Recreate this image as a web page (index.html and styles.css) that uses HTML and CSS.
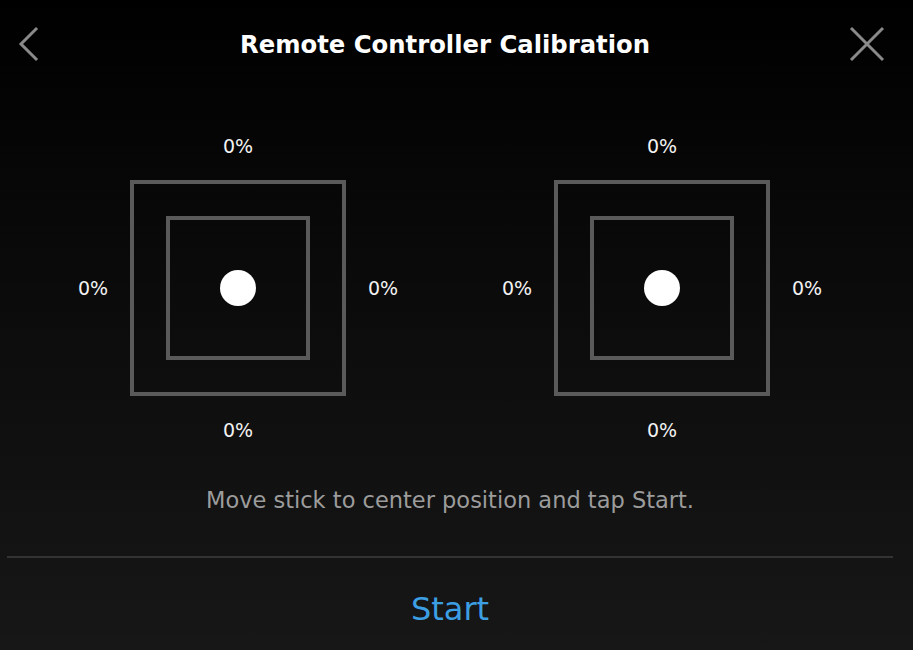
FILE: index.html
```html
<!DOCTYPE html>
<html>
<head>
<meta charset="utf-8">
<link rel="stylesheet" href="styles.css">
</head>
<body>
<div class="app">
  <header class="header">
    <button class="icon-btn back" aria-label="Back">
      <svg width="24" height="36" viewBox="0 0 24 36"><path d="M19 3 L4 18 L19 33" fill="none" stroke="#8a8a8a" stroke-width="3" stroke-linecap="square"/></svg>
    </button>
    <h1 class="title">Remote Controller Calibration</h1>
    <button class="icon-btn close" aria-label="Close">
      <svg width="36" height="36" viewBox="0 0 36 36"><path d="M2 2 L34 34 M34 2 L2 34" fill="none" stroke="#8a8a8a" stroke-width="3"/></svg>
    </button>
  </header>

  <section class="sticks">
    <div class="stick">
      <span class="pct top">0%</span>
      <span class="pct left">0%</span>
      <div class="outer"><div class="inner"><div class="dot"></div></div></div>
      <span class="pct right">0%</span>
      <span class="pct bottom">0%</span>
    </div>
    <div class="stick">
      <span class="pct top">0%</span>
      <span class="pct left">0%</span>
      <div class="outer"><div class="inner"><div class="dot"></div></div></div>
      <span class="pct right">0%</span>
      <span class="pct bottom">0%</span>
    </div>
  </section>

  <p class="hint">Move stick to center position and tap Start.</p>

  <div class="divider"></div>

  <button class="start">Start</button>
</div>
</body>
</html>
```

FILE: styles.css
```css
* { box-sizing: border-box; }
html, body { height: 100%; }
body {
  margin: 0;
  background: linear-gradient(to bottom, #000 0%, #0b0b0b 45%, #171717 100%);
  font-family: "DejaVu Sans", "Liberation Sans", sans-serif;
  color: #fff;
  overflow: hidden;
}
.app {
  width: 900px;
  height: 650px;
  display: flex;
  flex-direction: column;
  align-items: center;
}
.header {
  width: 100%;
  height: 88px;
  display: flex;
  align-items: center;
  justify-content: space-between;
  padding: 0 15px 0 17px;
}
.icon-btn {
  background: none;
  border: 0;
  padding: 0;
  display: flex;
  cursor: pointer;
}
.title {
  margin: 0;
  font-size: 24.3px;
  font-weight: 700;
  color: #fff;
}
.sticks {
  margin-top: 43px;
  display: flex;
  gap: 74px;
}
.stick {
  display: grid;
  grid-template-columns: 60px 216px 60px;
  grid-template-rows: 30px 216px 30px;
  column-gap: 7px;
  row-gap: 19px;
  grid-template-areas:
    ". t ."
    "l b r"
    ". d .";
}
.pct {
  font-size: 19px;
  color: #f2f2f2;
  display: flex;
  align-items: center;
  justify-content: center;
}
.pct.top { grid-area: t; }
.pct.left { grid-area: l; }
.pct.right { grid-area: r; }
.pct.bottom { grid-area: d; }
.outer {
  grid-area: b;
  border: 4px solid #5a5a5a;
  display: flex;
  align-items: center;
  justify-content: center;
}
.inner {
  width: 144px;
  height: 144px;
  border: 4px solid #5a5a5a;
  display: flex;
  align-items: center;
  justify-content: center;
}
.dot {
  width: 36px;
  height: 36px;
  border-radius: 50%;
  background: #fff;
}
.hint {
  margin: 40px 0 0;
  font-size: 22.5px;
  line-height: 30px;
  color: #9c9c9c;
}
.divider {
  margin-top: 41px;
  width: 886px;
  height: 2px;
  background: #333;
}
.start {
  margin-top: 29px;
  background: none;
  border: 0;
  padding: 0;
  font-family: "DejaVu Sans", sans-serif;
  font-size: 32px;
  line-height: 44px;
  color: #3d9fe3;
  cursor: pointer;
}
```
